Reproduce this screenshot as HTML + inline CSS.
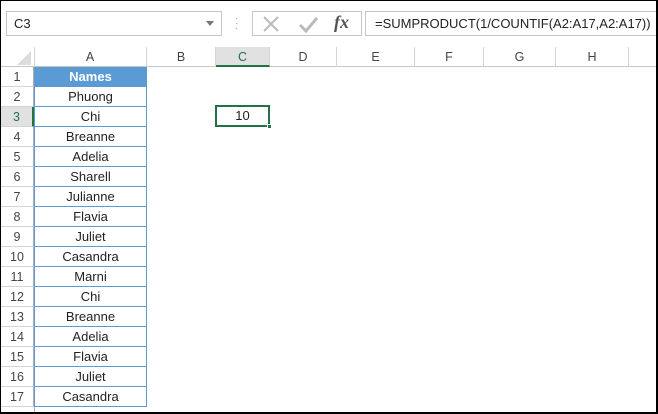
<!DOCTYPE html>
<html><head><meta charset="utf-8"><style>
*{margin:0;padding:0;box-sizing:border-box}
body{width:658px;height:414px;position:relative;overflow:hidden;background:#fff;font-family:"Liberation Sans",sans-serif;font-size:13px;color:#222}
.a{position:absolute}
.box{position:absolute;border:1px solid #c6c6c6;background:#fff}
.ch{position:absolute;top:47px;height:20px;line-height:20px;text-align:center;color:#444;font-size:12.5px;border-right:1px solid #d4d4d4}
.rh{position:absolute;left:1px;width:33px;height:20px;line-height:20px;text-align:center;color:#444;font-size:12.5px;border-bottom:1px solid #d4d4d4;border-right:1px solid #b0b0b0}
.c{position:absolute;left:34px;width:113px;height:20px;line-height:19px;text-align:center;border:1px solid #5b9bd5;border-top:none;font-size:13px}
</style></head><body>
<div class="box" style="left:6px;top:11px;width:216px;height:25px;line-height:23px;padding-left:7px;font-size:13px">C3</div>
<div class="a" style="left:206px;top:21px;width:0;height:0;border-left:4px solid transparent;border-right:4px solid transparent;border-top:5px solid #777"></div>
<div class="a" style="left:235px;top:16px;color:#999;font-size:10px;line-height:5px">·<br>·<br>·</div>
<div class="box" style="left:252px;top:11px;width:110px;height:25px"></div>
<svg class="a" style="left:262px;top:15px" width="90" height="18"><path d="M2 2L16 16M16 2L2 16" stroke="#bbb" stroke-width="2"/><path d="M38 10L44 16L55 3" stroke="#bbb" stroke-width="3" fill="none"/></svg>
<div class="a" style="left:334px;top:12px;font-family:'Liberation Serif',serif;font-style:italic;font-weight:bold;font-size:18px;color:#555">fx</div>
<div class="box" style="left:365px;top:11px;width:293px;height:25px;line-height:23px;padding-left:9px;font-size:13px;border-right:none">=SUMPRODUCT(1/COUNTIF(A2:A17,A2:A17))</div>
<div class="a" style="left:0;top:66px;width:658px;height:1px;background:#c6c6c6"></div>
<div class="a" style="left:17px;top:51px;width:0;height:0;border-left:14px solid transparent;border-bottom:14px solid #dcdcdc"></div>
<div class="a" style="left:34px;top:47px;width:1px;height:20px;background:#d4d4d4"></div>
<div class="ch" style="left:34px;width:113px">A</div>
<div class="ch" style="left:147px;width:69px">B</div>
<div class="ch" style="left:216px;width:54px;background:#e1e1e1;color:#217346;border-bottom:2px solid #217346;height:20px">C</div>
<div class="ch" style="left:270px;width:67px">D</div>
<div class="ch" style="left:337px;width:78px">E</div>
<div class="ch" style="left:415px;width:69px">F</div>
<div class="ch" style="left:484px;width:72px">G</div>
<div class="ch" style="left:556px;width:73px">H</div>
<div class="a" style="left:34px;top:67px;width:1px;height:347px;background:#b0b0b0"></div>
<div class="rh" style="top:67px">1</div><div class="rh" style="top:87px">2</div>
<div class="rh" style="top:107px;background:#e1e1e1;color:#217346;border-right:2px solid #217346">3</div>
<div class="rh" style="top:127px">4</div><div class="rh" style="top:147px">5</div><div class="rh" style="top:167px">6</div><div class="rh" style="top:187px">7</div><div class="rh" style="top:207px">8</div><div class="rh" style="top:227px">9</div><div class="rh" style="top:247px">10</div><div class="rh" style="top:267px">11</div><div class="rh" style="top:287px">12</div><div class="rh" style="top:307px">13</div><div class="rh" style="top:327px">14</div><div class="rh" style="top:347px">15</div><div class="rh" style="top:367px">16</div><div class="rh" style="top:387px">17</div>
<div class="c" style="top:67px;background:#5b9bd5;color:#fff;font-weight:bold">Names</div>
<div class="c" style="top:87px">Phuong</div><div class="c" style="top:107px">Chi</div><div class="c" style="top:127px">Breanne</div><div class="c" style="top:147px">Adelia</div><div class="c" style="top:167px">Sharell</div><div class="c" style="top:187px">Julianne</div><div class="c" style="top:207px">Flavia</div><div class="c" style="top:227px">Juliet</div><div class="c" style="top:247px">Casandra</div><div class="c" style="top:267px">Marni</div><div class="c" style="top:287px">Chi</div><div class="c" style="top:307px">Breanne</div><div class="c" style="top:327px">Adelia</div><div class="c" style="top:347px">Flavia</div><div class="c" style="top:367px">Juliet</div><div class="c" style="top:387px">Casandra</div>
<div class="a" style="left:215px;top:105px;width:55px;height:22px;border:2px solid #217346;text-align:center;line-height:18px">10</div>
<div class="a" style="left:267px;top:124px;width:5px;height:5px;background:#217346;border:1px solid #fff"></div>
<div class="a" style="left:0;top:0;width:658px;height:414px;border-top:1px solid #000;border-left:1px solid #000;border-right:2px solid #000;border-bottom:2px solid #000"></div>
</body></html>
